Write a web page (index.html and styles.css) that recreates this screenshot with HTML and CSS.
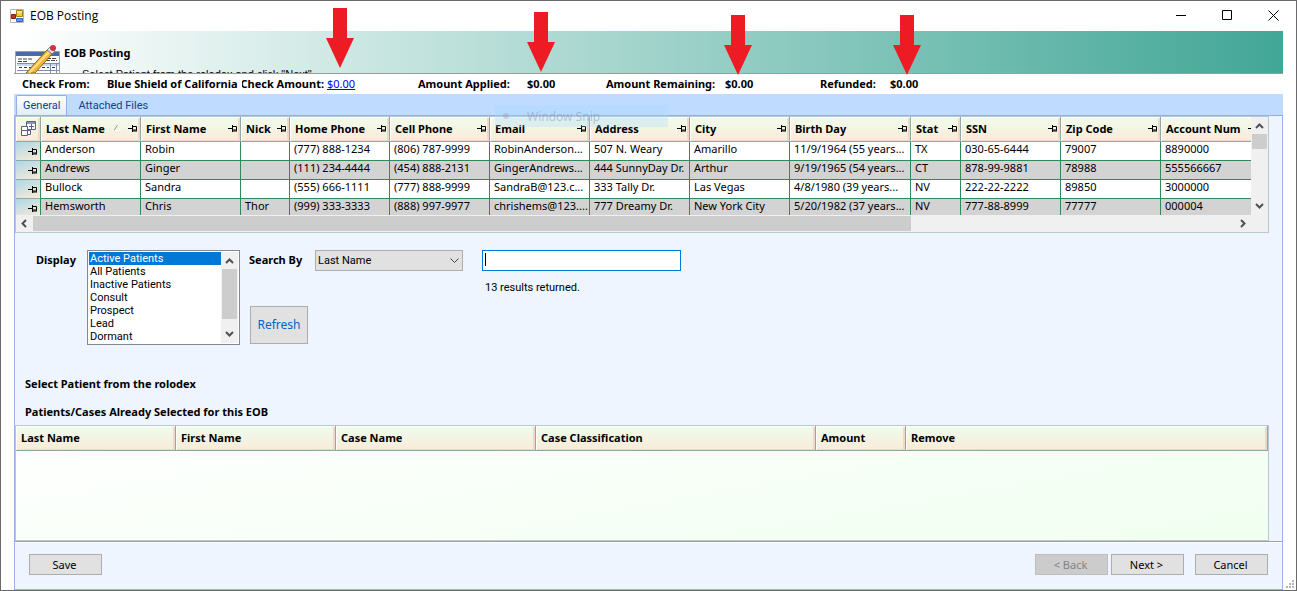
FILE: index.html
```html
<!DOCTYPE html>
<html lang="en">
<head>
  <meta charset="UTF-8">
  <meta name="viewport" content="width=device-width, initial-scale=1.0">
  <title>EOB Posting</title>
  <link rel="stylesheet" href="styles.css">
</head>
<body>
  <svg class="defs" aria-hidden="true">
    <symbol id="pin" viewBox="0 0 9 7"><path d="M0 3.500h4M4.500 0v7M5 1.500h3.500v4M5 5h4M5 6h4" fill="none" stroke="#000"/></symbol>
    <symbol id="up" viewBox="0 0 9 6"><path d="M1 5l3.500-3.500L8 5" fill="none" stroke="#505050" stroke-width="2"/></symbol>
    <symbol id="down" viewBox="0 0 9 6"><path d="M1 1l3.500 3.500L8 1" fill="none" stroke="#505050" stroke-width="2"/></symbol>
    <symbol id="left" viewBox="0 0 6 9"><path d="M5 1L1.500 4.500 5 8" fill="none" stroke="#505050" stroke-width="2"/></symbol>
    <symbol id="right" viewBox="0 0 6 9"><path d="M1 1l3.500 3.500L1 8" fill="none" stroke="#505050" stroke-width="2"/></symbol>
    <symbol id="arrow" viewBox="0 0 28 60"><path d="M7 0h14v30h7L14 60 0 30h7z" fill="#ed1c24"/></symbol>
  </svg>

  <div class="window">
    <header class="titlebar">
      <svg class="app-icon" width="14" height="14" viewBox="0 0 14 14">
        <path d="M.5 .5h13v13H.5z" fill="#fff" stroke="#b4b4b4"/>
        <path d="M6.500 1.500h6v6h-6z" fill="#fbc934" stroke="#b07d10"/>
        <path d="M7 2h5v2H7z" fill="#ffe588"/>
        <path d="M1.500 5.500h4v4h-4z" fill="#c9301c" stroke="#8c1a10"/>
        <path d="M6.500 9.500h6v3h-6z" fill="#5b9bf0" stroke="#2f66c4"/>
      </svg>
      <h1>EOB Posting</h1>
      <div class="window-buttons">
        <button aria-label="Minimize"><svg width="11" height="11"><path d="M0 5.500h10" stroke="#000"/></svg></button>
        <button aria-label="Maximize"><svg width="11" height="11"><path d="M.5 .5h9v9h-9z" fill="none" stroke="#000"/></svg></button>
        <button aria-label="Close"><svg width="11" height="11"><path d="M.5 .5l10 10M10.500 .5l-10 10" stroke="#000"/></svg></button>
      </div>
    </header>

    <main>
      <section class="banner">
        <svg width="46" height="28" viewBox="0 0 46 28">
          <path d="M.5 6.500h44V32H.5z" fill="#fff" stroke="#9a9fae"/>
          <path d="M1 7h43v4H1z" fill="#4a6ab0"/>
          <path d="M3 14h15M3 16.500h9M32 13.500h10M31 15.500h11" stroke="#444" stroke-dasharray="4 1"/>
          <path d="M2 18h42v3H2z" fill="#c7d6f2"/>
          <path d="M2 18.500h42M2 25.500h42M35.500 18v10M41.500 18v10" stroke="#7c8bb0"/>
          <path d="M4 22.500h18M27 22.500h7M37 22.500h4" stroke="#333" stroke-dasharray="3 2"/>
          <path d="M11 28L32 5l5 4-17 19z" fill="#f2b53a" stroke="#8a6414"/>
          <path d="M14 28L34 7" stroke="#ffe08a" stroke-width="2"/>
          <path d="M32 5l3-3 5 4-3 3z" fill="#dfe3e8" stroke="#7d858f"/>
          <circle cx="38" cy="3" r="3" fill="#d9303a"/>
        </svg>
        <div>
          <h2>EOB Posting</h2>
          <p>Select Patient from the rolodex and click "Next"</p>
        </div>
      </section>

      <section class="totals">
        <span>Check From:</span>
        <span>Blue Shield of California</span>
        <span class="cut">Check Amount:</span>
        <a href="#">$0.00</a>
        <span>Amount Applied:</span>
        <span>$0.00</span>
        <span>Amount Remaining:</span>
        <span>$0.00</span>
        <span>Refunded:</span>
        <span>$0.00</span>
      </section>

      <nav class="tabs">
        <button class="tab active">General</button>
        <button class="tab">Attached Files</button>
      </nav>

      <div class="page">
        <section class="rolodex">
          <div class="rows">
            <table>
              <colgroup>
                <col class="w25"><col class="w100"><col class="w100"><col class="w49"><col class="w100"><col class="w100"><col class="w100"><col class="w100"><col class="w100"><col class="w121"><col class="w50"><col class="w100"><col class="w100"><col class="w100">
              </colgroup>
              <thead>
                <tr>
                  <th class="picker">
                    <svg width="15" height="15" viewBox="0 0 15 15">
                      <path d="M5.500 .5h9v8h-9z" fill="#fff" stroke="#5b5f8c"/>
                      <path d="M6 1h8v2H6z" fill="#8d93c4"/>
                      <path d="M8 5.500h5M10.500 3v5" stroke="#5b5f8c"/>
                      <path d="M3.500 9.500h6v4h-6z" fill="#fff" stroke="#5b5f8c"/>
                      <path d="M.5 5.500h6v4h-6zM.5 9.500h6v5h-6z" fill="#fff" stroke="#5b5f8c"/>
                    </svg>
                  </th>
                  <th><div>Last Name <svg class="sort" width="7" height="6"><path d="M0 5.500h6.500L3.500 0" fill="none" stroke="#fff"/><path d="M0 5.500L3.500 0" stroke="#999"/></svg><svg class="pin"><use href="#pin"/></svg></div></th>
                  <th><div>First Name <svg class="pin"><use href="#pin"/></svg></div></th>
                  <th><div>Nick <svg class="pin"><use href="#pin"/></svg></div></th>
                  <th><div>Home Phone <svg class="pin"><use href="#pin"/></svg></div></th>
                  <th><div>Cell Phone <svg class="pin"><use href="#pin"/></svg></div></th>
                  <th><div>Email <svg class="pin"><use href="#pin"/></svg></div></th>
                  <th><div>Address <svg class="pin"><use href="#pin"/></svg></div></th>
                  <th><div>City <svg class="pin"><use href="#pin"/></svg></div></th>
                  <th><div>Birth Day <svg class="pin"><use href="#pin"/></svg></div></th>
                  <th><div>Stat <svg class="pin"><use href="#pin"/></svg></div></th>
                  <th><div>SSN <svg class="pin"><use href="#pin"/></svg></div></th>
                  <th><div>Zip Code <svg class="pin"><use href="#pin"/></svg></div></th>
                  <th><div>Account Num <svg class="pin"><use href="#pin"/></svg></div></th>
                </tr>
              </thead>
              <tbody>
                <tr><td class="grip"><svg class="pin"><use href="#pin"/></svg></td><td>Anderson</td><td>Robin</td><td></td><td>(777) 888-1234</td><td>(806) 787-9999</td><td>RobinAnderson...</td><td>507 N. Weary</td><td>Amarillo</td><td>11/9/1964 (55 years...</td><td>TX</td><td>030-65-6444</td><td>79007</td><td>8890000</td></tr>
                <tr><td class="grip"><svg class="pin"><use href="#pin"/></svg></td><td>Andrews</td><td>Ginger</td><td></td><td>(111) 234-4444</td><td>(454) 888-2131</td><td>GingerAndrews...</td><td>444 SunnyDay Dr.</td><td>Arthur</td><td>9/19/1965 (54 years...</td><td>CT</td><td>878-99-9881</td><td>78988</td><td>555566667</td></tr>
                <tr><td class="grip"><svg class="pin"><use href="#pin"/></svg></td><td>Bullock</td><td>Sandra</td><td></td><td>(555) 666-1111</td><td>(777) 888-9999</td><td>SandraB@123.c...</td><td>333 Tally Dr.</td><td>Las Vegas</td><td>4/8/1980 (39 years...</td><td>NV</td><td>222-22-2222</td><td>89850</td><td>3000000</td></tr>
                <tr><td class="grip"><svg class="pin"><use href="#pin"/></svg></td><td>Hemsworth</td><td>Chris</td><td>Thor</td><td>(999) 333-3333</td><td>(888) 997-9977</td><td>chrishems@123....</td><td>777 Dreamy Dr.</td><td>New York City</td><td>5/20/1982 (37 years...</td><td>NV</td><td>777-88-8999</td><td>77777</td><td>000004</td></tr>
              </tbody>
            </table>
          </div>
          <div class="vscroll"><svg width="9" height="6"><use href="#up"/></svg><i></i><svg width="9" height="6"><use href="#down"/></svg></div>
          <div class="hscroll"><svg width="6" height="9"><use href="#left"/></svg><i></i><b></b><svg width="6" height="9"><use href="#right"/></svg></div>
        </section>

        <form class="search" onsubmit="return false">
          <label class="display-label" for="display">Display</label>
          <div class="listbox">
            <select id="display" size="7">
              <option selected>Active Patients</option>
              <option>All Patients</option>
              <option>Inactive Patients</option>
              <option>Consult</option>
              <option>Prospect</option>
              <option>Lead</option>
              <option>Dormant</option>
            </select>
            <div class="vscroll"><svg width="9" height="6"><use href="#up"/></svg><i></i><svg width="9" height="6"><use href="#down"/></svg></div>
          </div>
          <div class="by">
            <label for="field">Search By</label>
            <div class="combo">
              <select id="field"><option>Last Name</option></select>
              <svg width="9" height="6" viewBox="0 0 9 6"><path d="M.5 .5l4 4 4-4" fill="none" stroke="#444"/></svg>
            </div>
            <button class="refresh">Refresh</button>
          </div>
          <div class="query">
            <input type="text" aria-label="Search text">
            <p>13 results returned.</p>
          </div>
        </form>

        <h3>Select Patient from the rolodex</h3>
        <h3 class="second">Patients/Cases Already Selected for this EOB</h3>

        <section class="selected">
          <table>
            <colgroup><col class="w160"><col class="w160"><col class="w200"><col class="w280"><col class="w90"><col></colgroup>
            <thead>
              <tr><th>Last Name</th><th>First Name</th><th>Case Name</th><th>Case Classification</th><th>Amount</th><th>Remove</th></tr>
            </thead>
          </table>
        </section>

        <footer>
          <button>Save</button>
          <button class="back" disabled>&lt; Back</button>
          <button>Next &gt;</button>
          <button class="cancel">Cancel</button>
        </footer>
      </div>
    </main>

    <svg class="resize" width="8" height="8" fill="#b8b8b8"><path d="M6 0h2v2H6zM3 3h2v2H3zM6 3h2v2H6zM0 6h2v2H0zM3 6h2v2H3zM6 6h2v2H6z"/></svg>

    <!-- callouts over the window -->
    <svg class="arrow check"><use href="#arrow"/></svg>
    <svg class="arrow applied"><use href="#arrow"/></svg>
    <svg class="arrow remaining"><use href="#arrow"/></svg>
    <svg class="arrow refunded"><use href="#arrow"/></svg>
    <div class="snip"><i></i><span>Window Snip</span></div>
  </div>
</body>
</html>
```
FILE: styles.css
```css
* { box-sizing: border-box; }
body { margin: 0; background: #fff; color: #000; font: 11px/13px "Noto Sans", sans-serif; }
h1, h2, h3, p { margin: 0; font-size: inherit; }
button, input, select { font: inherit; color: inherit; margin: 0; }
svg { display: block; flex: none; }
.defs { position: absolute; width: 0; height: 0; }

.window { position: relative; display: flex; flex-direction: column; min-height: 100vh; border: 1px solid #6b696b; background: #fff; }
.titlebar { display: flex; align-items: center; height: 30px; padding: 0 0 1px 9px; }
.titlebar h1 { margin-left: 6px; font: 12px/16px "Open Sans", sans-serif; }
.window-buttons { display: flex; margin-left: auto; }
.window-buttons button { display: flex; justify-content: center; width: 46px; padding: 0; border: 0; background: none; }

main { display: flex; flex-direction: column; flex: 1; margin: 0 13px; }
.banner { display: flex; height: 43px; overflow: hidden; border-bottom: 1px solid #9a9c9a; background: linear-gradient(90deg, #fff, #42a797); }
.banner svg { margin: 14px 0 0 1px; }
.banner h2 { margin: 15px 0 0 3px; font-weight: bold; }
.banner p { margin: 8px 0 0 21px; font: 11px/14px "Liberation Sans", sans-serif; }

.totals { display: grid; grid-template-columns: 85px 135px 82px 94px 109px 79px 119px 95px 70px auto; align-items: center; height: 20px; padding: 0 0 2px 8px; font-weight: bold; white-space: nowrap; }
.totals a { font-weight: normal; color: #00f; padding-left: 3px; }
.totals .cut { display: flex; justify-content: flex-end; overflow: hidden; }

.tabs { display: flex; align-items: flex-end; height: 22px; padding-left: 2px; background: #bfdbff; border-bottom: 1px solid #8db2e3; font-family: Roboto, sans-serif; }
.tab { height: 20px; padding: 0 6px; border: 1px solid transparent; border-bottom: 0; background: none; color: #15428b; }
.tab + .tab { padding-left: 10px; }
.tab.active { border-color: #8db2e3; border-radius: 2px 2px 0 0; background: linear-gradient(#fff, #e3ecf8); }

.page { display: flex; flex-direction: column; flex: 1; border: solid #97b5e8; border-width: 0 1px 1px; background: #eef5fe; }

table { border-collapse: separate; border-spacing: 0; table-layout: fixed; }
th { height: 25px; padding: 0 3px 2px 5px; border: solid #8fa9a9; border-width: 0 1px 1px 0; background: linear-gradient(#effceb, #f9ebd9); box-shadow: inset 1px 1px #fff, inset -2px -1px #f0d9c4; text-align: left; white-space: nowrap; }
.w25 { width: 25px; }
.w49 { width: 49px; }
.w50 { width: 50px; }
.w90 { width: 90px; }
.w100 { width: 100px; }
.w121 { width: 121px; }
.w160 { width: 160px; }
.w200 { width: 200px; }
.w280 { width: 280px; }

.rolodex { display: grid; grid-template-columns: 1fr 17px; margin-right: 13px; border: 1px solid #b9c7d3; background: #f0f0f0; }
.rows { height: 98px; overflow: hidden; }
.rows table { width: 1245px; }
.rows th div { display: flex; align-items: center; }
.pin { width: 9px; height: 7px; margin-left: auto; }
.sort { margin-left: auto; }
.sort + .pin { margin-left: 7px; }
td { height: 19px; padding: 0 0 5px 4px; border: solid #2e8b57; border-width: 0 1px 1px 0; background: #fff; white-space: nowrap; overflow: hidden; }
tr:nth-child(even) td { background: #d3d3d3; }
.rows td.grip { padding: 0 3px 0 0; border-bottom-color: #8fa9a9; background: linear-gradient(160deg, #add8e6, #faebd7); }

.vscroll, .hscroll { display: flex; align-items: center; background: #f0f0f0; }
.vscroll { flex-direction: column; padding: 6px 0; }
.vscroll i, .hscroll i { background: #cdcdcd; }
.vscroll i { width: 15px; height: 15px; margin: 5px 0 auto; }
.hscroll { height: 17px; padding: 0 5px; }
.hscroll i { flex: 8; height: 15px; margin-left: 6px; }
.hscroll b { flex: 3; }

.search { display: flex; padding: 17px 0 0 21px; }
.search label { padding-top: 3px; font-weight: bold; }
.display-label { width: 51px; }
.listbox { display: flex; width: 153px; height: 95px; padding: 1px; border: 1px solid #828790; background: #fff; }
.listbox select { flex: 1; min-width: 0; height: 91px; padding: 0; border: 0; border-radius: 0; outline: 0; overflow: hidden; background: #fff; font-family: Roboto, sans-serif; }
.listbox option { height: 13px; min-height: 13px; padding: 0 1px; border-radius: 0; line-height: 13px; }
.listbox option:checked { background: linear-gradient(#0078d7, #0078d7); color: #fff; -webkit-text-fill-color: #fff; }
.listbox .vscroll { width: 17px; }
.listbox .vscroll i { height: 50px; }
.by { display: grid; grid-template-columns: 66px 148px; grid-template-rows: 21px auto; align-content: start; row-gap: 35px; margin-left: 9px; }
.combo { display: grid; align-items: center; }
.combo > * { grid-area: 1 / 1; }
.combo select { width: 100%; height: 21px; padding: 0 2px; border: 1px solid #adadad; border-radius: 0; background: #e1e1e1; font-family: Roboto, sans-serif; appearance: none; }
.combo svg { justify-self: end; margin-right: 4px; pointer-events: none; }
.refresh { width: 58px; height: 38px; margin-left: 1px; padding: 0 0 2px; border: 1px solid #adadad; background: #e1e1e1; color: #0066cc; font-size: 12px; }
.query { margin-left: 19px; }
.query input { display: block; width: 199px; height: 21px; padding: 0 3px; border: 1px solid #0078d7; outline: 0; background: linear-gradient(#000, #000) 2px 2px / 1px 13px no-repeat #fff; }
.query p { margin: 10px 0 0 3px; font-family: Roboto, sans-serif; }

h3 { margin: 32px 0 0 10px; font-weight: bold; }
h3.second { margin-top: 15px; }

.selected { flex: 1; margin: 7px 13px 0 0; border: 1px solid #b9c7d3; background: linear-gradient(170deg, #fff, #f0fff0); }
.selected table { width: 100%; }

footer { display: flex; gap: 3px; padding: 12px 14px 14px; border-top: 1px solid #a0a0a0; box-shadow: inset 0 1px #fff; }
footer button { width: 73px; height: 21px; padding: 0 2px 0 0; border: 1px solid #adadad; background: #e1e1e1; }
footer .back { margin-left: auto; border-color: #bfbfbf; background: #ccc; color: #838383; }
footer .cancel { margin-left: 8px; }

.resize { position: absolute; right: 2px; bottom: 2px; }
.arrow { position: absolute; width: 28px; height: 60px; }
.check { left: 325px; top: 7px; }
.applied { left: 526px; top: 11px; }
.remaining { left: 723px; top: 14px; }
.refunded { left: 892px; top: 14px; }
.snip { position: absolute; left: 494px; top: 104px; display: flex; align-items: center; width: 173px; height: 22px; background: rgba(165, 215, 255, .3); color: rgba(110, 110, 130, .35); font-size: 12px; }
.snip i { width: 6px; height: 6px; margin: 0 18px 0 8px; border-radius: 3px; background: rgba(150, 140, 150, .3); }
```
